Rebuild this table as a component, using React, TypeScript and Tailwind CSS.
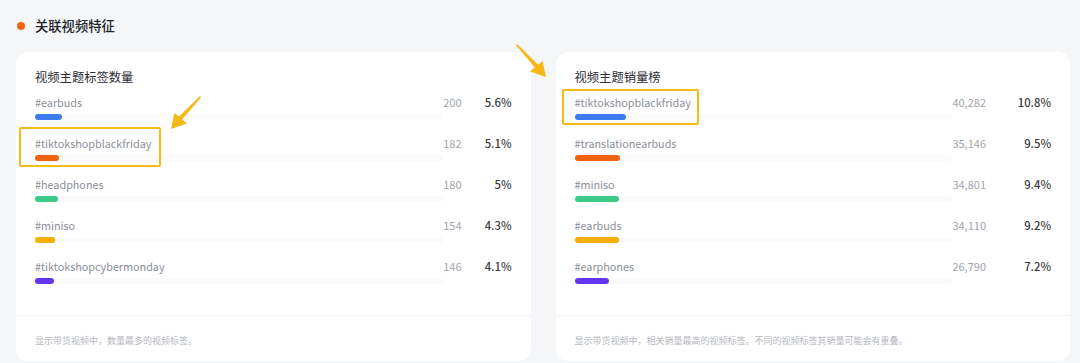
type Row = {
  tag: string;
  value: string;
  pct: string;
  bar: number;
  color: string;
};

const countRows: Row[] = [
  { tag: "#earbuds", value: "200", pct: "5.6%", bar: 27, color: "bg-[#3b7cf0]" },
  { tag: "#tiktokshopblackfriday", value: "182", pct: "5.1%", bar: 24, color: "bg-[#f2620f]" },
  { tag: "#headphones", value: "180", pct: "5%", bar: 23, color: "bg-[#3cc98a]" },
  { tag: "#miniso", value: "154", pct: "4.3%", bar: 20, color: "bg-[#f8ad08]" },
  { tag: "#tiktokshopcybermonday", value: "146", pct: "4.1%", bar: 19, color: "bg-[#6236f0]" },
];

const salesRows: Row[] = [
  { tag: "#tiktokshopblackfriday", value: "40,282", pct: "10.8%", bar: 51, color: "bg-[#3b7cf0]" },
  { tag: "#translationearbuds", value: "35,146", pct: "9.5%", bar: 45, color: "bg-[#f2620f]" },
  { tag: "#miniso", value: "34,801", pct: "9.4%", bar: 44, color: "bg-[#3cc98a]" },
  { tag: "#earbuds", value: "34,110", pct: "9.2%", bar: 44, color: "bg-[#f8ad08]" },
  { tag: "#earphones", value: "26,790", pct: "7.2%", bar: 34, color: "bg-[#6236f0]" },
];

function Arrow({ flip }: { flip?: boolean }) {
  // tapered stroke with a head, drawn pointing down-left
  return (
    <svg
      width="36"
      height="38"
      viewBox="0 0 36 38"
      className={flip ? "-scale-x-100" : ""}
    >
      <path d="M33 2 L34 3.2 L13.5 27.5 L10 24.5 Z" fill="#f6b817" />
      <path d="M4 35 L7.5 19 L20 29.5 Z" fill="#f6b817" />
    </svg>
  );
}

function Card({
  title,
  rows,
  pctWidth,
  footer,
  highlight,
}: {
  title: string;
  rows: Row[];
  pctWidth: string;
  footer: string;
  highlight: { index: number; box: string };
}) {
  return (
    <div className="flex-1 h-[309px] rounded-xl bg-white flex flex-col">
      <div className="px-[19px] pt-4 h-[263px]">
        <div className="text-[12.3px] leading-[18px] text-[#2b2d33]">{title}</div>
        <div className="mt-2 flex flex-col gap-[15px]">
          {rows.map((r, i) => (
            <div key={r.tag} className="relative flex items-start">
              {highlight.index === i && (
                <div
                  className={`absolute border-2 border-[#f6bb16] rounded-[2px] ${highlight.box}`}
                />
              )}
              <div className="flex-1">
                <div className="text-[10.8px] leading-[17px] text-[#8b8f98]">{r.tag}</div>
                <div className="mt-[3px] h-[6px] rounded-full bg-[#fbfbfc]">
                  <div
                    className={`h-[6px] rounded-full ${r.color}`}
                    style={{ width: r.bar }}
                  />
                </div>
              </div>
              <div className="text-[11px] leading-[17px] text-[#a2a5ab] text-right">
                {r.value}
              </div>
              <div
                className={`${pctWidth} text-[11.3px] leading-[17px] font-medium text-[#3a3c42] text-right`}
              >
                {r.pct}
              </div>
            </div>
          ))}
        </div>
      </div>
      <div className="border-t border-[#f3f4f6] px-[19px] pt-[18px]">
        <div className="text-[9px] leading-[14px] text-[#b5b8be]">{footer}</div>
      </div>
    </div>
  );
}

export default function App() {
  return (
    <div
      className="relative w-[1080px] h-[363px] overflow-hidden bg-[#f5f6f8]"
      style={{ fontFamily: '"Noto Sans CJK SC", "Noto Sans", sans-serif' }}
    >
      <div className="flex items-center gap-[10px] pl-[17px] pt-[12px] h-[40px]">
        <span className="w-2 h-2 rounded-full bg-[#f4650f]" />
        <span className="text-[13.3px] font-medium text-[#22242a]">关联视频特征</span>
      </div>
      <div className="flex gap-[25px] pl-4 pr-[10px] pt-3">
        <Card
          title="视频主题标签数量"
          rows={countRows}
          pctWidth="w-[50px]"
          footer="显示带货视频中，数量最多的视频标签。"
          highlight={{ index: 1, box: "-left-4 -top-[8px] w-[142px] h-[40px]" }}
        />
        <Card
          title="视频主题销量榜"
          rows={salesRows}
          pctWidth="w-[65px]"
          footer="显示带货视频中，相关销量最高的视频标签。不同的视频标签其销量可能会有重叠。"
          highlight={{ index: 0, box: "-left-[13px] -top-[5px] w-[137px] h-[36px]" }}
        />
      </div>
      <div className="absolute left-[167px] top-[94px]">
        <Arrow />
      </div>
      <div className="absolute left-[514px] top-[42px]">
        <Arrow flip />
      </div>
    </div>
  );
}
